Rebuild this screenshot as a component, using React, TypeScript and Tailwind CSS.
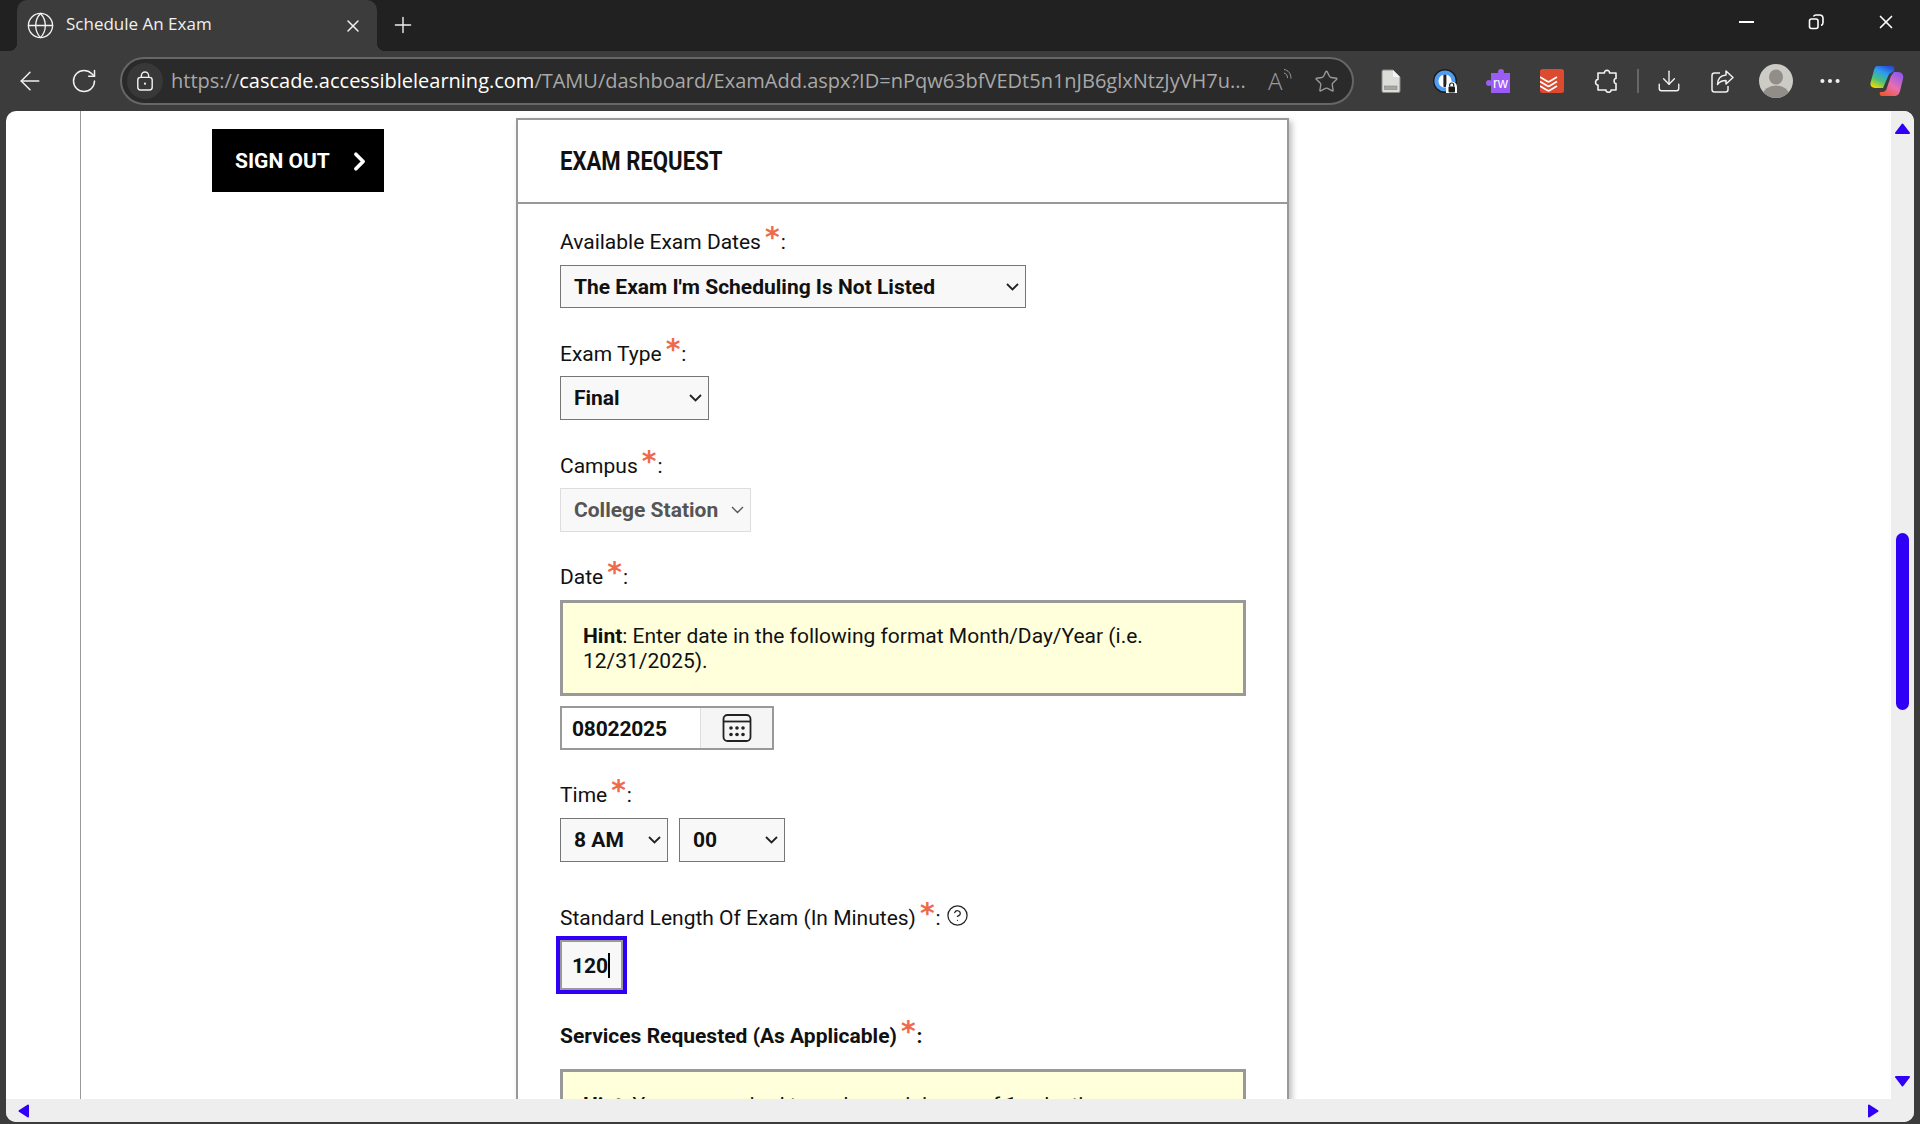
import { ArrowLeft, CircleHelp, Globe, Plus, RotateCw, Star, X, ChevronRight, Download, Ellipsis } from 'lucide-react';
import type { ReactNode } from 'react';

function RequiredLabel({ children, bold, className }: { children: ReactNode; bold?: boolean; className?: string }) {
  return (
    <label className={`flex h-[24px] items-center text-[21px] leading-[24px] text-[#111] ${bold ? 'font-bold' : ''} ${className ?? ''}`}>
      <span>{children}</span>
      <span className="ml-[4px] -translate-y-[4px] font-['DejaVu_Sans',sans-serif] text-[28px] leading-[24px] font-bold text-[#ed6a4a]">*</span>
      <span className="ml-[1px]">:</span>
    </label>
  );
}

function Hint({ children, className }: { children: ReactNode; className?: string }) {
  return (
    <div className={`w-[686px] border-[3px] border-[#999] bg-[#ffffdc] px-[20px] py-[21px] text-[21px] leading-[25px] text-[#111] ${className ?? ''}`}>
      <strong>Hint</strong>: {children}
    </div>
  );
}

function Select({ value, className, muted }: { value: string; className: string; muted?: boolean }) {
  return (
    <div className={`relative ${className}`}>
      <select
        disabled={muted}
        defaultValue={value}
        className={`block h-full w-full appearance-none border pl-[13px] pt-[2px] text-[21px] font-bold opacity-100 ${muted ? 'border-[#ddd] bg-[#f8f8f8] text-[#555]' : 'border-[#767676] bg-[#f8f8f8] text-[#111]'}`}
      >
        <option value={value}>{value}</option>
      </select>
      <svg viewBox="0 0 13 8" fill="none" stroke={muted ? '#555' : '#222'} strokeWidth={muted ? 1.4 : 1.8} className="pointer-events-none absolute right-[7px] top-1/2 h-[8px] w-[13px] -translate-y-1/2">
        <path d="M1 1l5.500 5.500L12 1" />
      </svg>
    </div>
  );
}

function ExtensionIcons() {
  return (
    <div className="flex items-center">
      <svg viewBox="0 0 21 24" className="h-[24px] w-[21px]">
        <path d="M2 2.500A1.500 1.500 0 0 1 3.500 1H13l7 7v14a1.500 1.500 0 0 1-1.500 1.500h-15A1.500 1.500 0 0 1 2 22z" fill="#dcdcd8" stroke="#8a8a88" />
        <path d="M13 1v7h7z" fill="#f4f4f2" />
        <rect x="4.500" y="17" width="12.500" height="3.500" fill="#a6a6a4" stroke="#777" strokeWidth="0.5" />
      </svg>
      <svg viewBox="0 0 24 24" className="ml-[32px] h-[24px] w-[24px]">
        <circle cx="12" cy="12" r="12" fill="#1c1c1c" />
        <circle cx="12" cy="12" r="8.600" fill="#fff" stroke="#4f9cf5" strokeWidth="4" />
        <rect x="10.400" y="5.500" width="3" height="12.500" rx="1" fill="#222" />
        <path d="M13 24v-6a4 4 0 0 1 11 0v6z" fill="#fff" />
        <rect x="15.500" y="17.500" width="6.500" height="6" rx="1" fill="#1c1c1c" />
        <path d="M16.700 17.500v-1.500a2 2 0 0 1 4 0v1.500" fill="none" stroke="#1c1c1c" strokeWidth="1.200" />
      </svg>
      <div className="relative ml-[29px] h-[24px] w-[24px]">
        <span className="absolute left-[0px] top-[11px] h-[6px] w-[6px] rounded-full bg-[#9b5cf6]" />
        <span className="absolute left-[12px] top-[0px] h-[6px] w-[6px] rounded-full bg-[#9b5cf6]" />
        <span className="absolute left-[5px] top-[4px] flex h-[20px] w-[19px] items-center justify-center bg-[#9b5cf6] font-['Liberation_Sans',sans-serif] text-[14px] leading-none text-white">rw</span>
      </div>
      <svg viewBox="0 0 24 24" className="ml-[30px] h-[24px] w-[24px]">
        <rect width="24" height="24" rx="2.500" fill="#dc4a30" />
        <path d="M0 8l7.500 4.500c.8.400 1.200.400 2 0L17 8M0 12.500l7.500 4.500c.8.400 1.200.400 2 0l7.500-4.500M0 17l7.500 4.500c.8.400 1.200.400 2 0l7.500-4.500" fill="none" stroke="#fff" strokeWidth="1.800" />
      </svg>
      <svg viewBox="0 0 24 24" fill="none" stroke="#f2f2f2" strokeWidth="1.600" strokeLinejoin="round" className="ml-[30px] h-[24px] w-[24px]">
        <path d="M4 4h6.500c-.5-3.500 5.500-3.500 5 0H22v5.500c-2.500-.5-2.500 5.500 0 5V21h-5c.5 3-5.500 3-5 0H4v-5C.8 16.500.8 10 4 10.500z" />
      </svg>
    </div>
  );
}

function Copilot() {
  return (
    <svg viewBox="0 0 34 32" className="h-[32px] w-[34px]">
      <defs>
        <linearGradient id="cpa" x1="0.2" y1="1" x2="0.7" y2="0">
          <stop offset="0" stopColor="#f5d800" />
          <stop offset="0.35" stopColor="#48c27a" />
          <stop offset="0.7" stopColor="#2f9bf0" />
          <stop offset="1" stopColor="#2a4fd8" />
        </linearGradient>
        <linearGradient id="cpb" x1="0.2" y1="1" x2="0.8" y2="0">
          <stop offset="0" stopColor="#f0562e" />
          <stop offset="0.45" stopColor="#e86fb0" />
          <stop offset="1" stopColor="#8f58ee" />
        </linearGradient>
      </defs>
      <path d="M7 1h14c3 0 4 2 3 5l-5 3-6 14H5c-4 0-5.500-3-4-7L4 5c1-3 2-4 3-4z" fill="url(#cpa)" />
      <path d="M21 11l3-4h4c4 0 6 3 5 7l-3 12c-1 4-3 5-6 5H12c-2 0-3-2-2-4 4 0 5.500-.5 6.500-3z" fill="url(#cpb)" />
    </svg>
  );
}

function Chrome() {
  return (
    <>
      <div className="flex h-[51px] shrink-0 items-end bg-[#212121] pl-[17px]">
        <div className="relative flex h-[51px] w-[360px] items-center rounded-t-[10px] bg-[#3c3c3c] pl-[9px] pr-[14px] text-white">
          <span className="absolute -left-[8px] bottom-0 h-[8px] w-[8px] bg-[radial-gradient(circle_at_0_0,transparent_8px,#3c3c3c_8px)]" />
          <span className="absolute -right-[8px] bottom-0 h-[8px] w-[8px] bg-[radial-gradient(circle_at_100%_0,transparent_8px,#3c3c3c_8px)]" />
          <Globe className="h-[29px] w-[29px] text-[#f2f2f2]" strokeWidth={1.100} />
          <span className="ml-[11px] flex-1 -translate-y-[2px] font-['Open_Sans',sans-serif] text-[17px] text-[#f0f0f0]">Schedule An Exam</span>
          <X className="h-[20px] w-[20px] text-[#f0f0f0]" strokeWidth={1.800} />
        </div>
        <Plus className="mb-[13px] ml-[13px] h-[26px] w-[26px] text-[#f0f0f0]" strokeWidth={1.300} />
        <div className="mb-[18px] ml-auto flex items-center text-white">
          <span className="h-[2px] w-[15px] bg-white" />
          <svg viewBox="0 0 16 16" fill="none" stroke="#fff" strokeWidth="1.600" className="ml-[54px] h-[16px] w-[16px]">
            <rect x="1.500" y="5" width="8.500" height="9.500" rx="2" />
            <path d="M5.500 2.500c.5-1 1.200-1.500 2.500-1.500h3.500c2 0 3.500 1.500 3.500 3.500v4c0 1.500-.5 2.500-2 3" />
          </svg>
          <X className="ml-[51px] mr-[23px] h-[22px] w-[22px]" strokeWidth={1.800} />
        </div>
      </div>
      <div className="flex h-[60px] shrink-0 items-center bg-[#3c3c3c]">
        <ArrowLeft className="ml-[15px] h-[30px] w-[30px] text-[#f0f0f0]" strokeWidth={1.200} />
        <RotateCw className="ml-[25px] h-[28px] w-[28px] text-[#f0f0f0]" strokeWidth={1.300} />
        <div className="ml-[22px] flex h-[48px] w-[1234px] items-center rounded-full border-2 border-[#666] bg-[#2a2a2a] pl-[5px]">
          <span className="flex h-[36px] w-[36px] items-center justify-center rounded-full bg-[#383838]">
            <svg viewBox="0 0 20 24" fill="none" stroke="#f0f0f0" strokeWidth="1.600" className="h-[22px] w-[18px]">
              <rect x="2" y="8" width="16" height="14" rx="3" />
              <path d="M6 8V6a4 4 0 0 1 8 0v2" />
              <circle cx="10" cy="15" r="1.200" fill="#f0f0f0" stroke="none" />
            </svg>
          </span>
          <span className="ml-[8px] w-[1076px] truncate font-['Open_Sans',sans-serif] text-[20px] text-[#a8a8a8]">
            https://<span className="text-white">cascade.accessiblelearning.com</span>/TAMU/dashboard/ExamAdd.aspx?ID=nPqw63bfVEDt5n1nJB6glxNtzJyVH7u...
          </span>
          <span className="relative ml-[21px] h-[26px] w-[24px]">
            <span className="absolute bottom-0 left-0 font-['Open_Sans',sans-serif] text-[24px] leading-[26px] font-light text-[#999]">A</span>
            <svg viewBox="0 0 10 12" fill="none" stroke="#999" strokeWidth="1" className="absolute -right-[1px] top-0 h-[12px] w-[10px]">
              <path d="M1 1.500c4 .5 7 4 7 9M1 5c2 .5 3.500 2 3.500 5" />
            </svg>
          </span>
          <Star className="ml-[22px] h-[25px] w-[25px] text-[#999]" strokeWidth={1.300} />
        </div>
        <div className="ml-[26px]">
          <ExtensionIcons />
        </div>
        <span className="ml-[19px] h-[24px] w-[2px] bg-[#666]" />
        <Download className="ml-[17px] h-[26px] w-[26px] text-[#f0f0f0]" strokeWidth={1.300} />
        <svg viewBox="0 0 24 24" fill="none" stroke="#f0f0f0" strokeWidth="1.500" strokeLinejoin="round" className="ml-[28px] h-[24px] w-[24px]">
          <path d="M10 4H4.500A2.500 2.500 0 0 0 2 6.500v14A2.500 2.500 0 0 0 4.500 23h11a2.500 2.500 0 0 0 2.500-2.500V17" />
          <path d="M16 2l7 6.500-7 6.500v-3.500c-4 0-6.500 1-8.500 4 0-5.500 3-9 8.500-9.500z" />
        </svg>
        <svg viewBox="0 0 34 34" className="ml-[25px] h-[34px] w-[34px]">
          <clipPath id="av"><circle cx="17" cy="17" r="17" /></clipPath>
          <g clipPath="url(#av)">
            <rect width="34" height="34" fill="#cdcbc6" />
            <ellipse cx="17" cy="13" rx="7" ry="7.500" fill="#918e8a" />
            <ellipse cx="17" cy="31" rx="13" ry="9.500" fill="#918e8a" />
          </g>
        </svg>
        <Ellipsis className="ml-[24px] h-[26px] w-[26px] text-[#f0f0f0]" strokeWidth={1.800} />
        <div className="ml-[27px]">
          <Copilot />
        </div>
      </div>
    </>
  );
}

function Arrow({ d, className }: { d: string; className: string }) {
  return (
    <svg className={className}>
      <path d={d} fill="#2f00f5" stroke="#2f00f5" strokeWidth="2" strokeLinejoin="round" />
    </svg>
  );
}

function ExamRequest() {
  return (
    <section className="mt-[7px] h-[1200px] w-[773px] shrink-0 border-2 border-[#999] shadow-[3px_3px_6px_rgba(0,0,0,0.25)]">
      <div className="flex h-[84px] items-center border-b-2 border-[#999] pl-[42px] pt-[2px]">
        <h2 className="origin-left scale-x-[0.885] whitespace-nowrap text-[25px] font-bold uppercase text-[#111]">Exam Request</h2>
      </div>
      <div className="flex flex-col items-start pl-[42px]">
        <RequiredLabel className="mt-[26px]">Available Exam Dates</RequiredLabel>
        <Select value="The Exam I'm Scheduling Is Not Listed" className="mt-[11px] h-[43px] w-[466px]" />

        <RequiredLabel className="mt-[34px]">Exam Type</RequiredLabel>
        <Select value="Final" className="mt-[10px] h-[44px] w-[149px]" />

        <RequiredLabel className="mt-[34px]">Campus</RequiredLabel>
        <Select muted value="College Station" className="mt-[10px] h-[44px] w-[191px]" />

        <RequiredLabel className="mt-[33px]">Date</RequiredLabel>
        <Hint className="mt-[11px] h-[96px]">Enter date in the following format Month/Day/Year (i.e. 12/31/2025).</Hint>
        <div className="mt-[10px] flex h-[44px] w-[214px] border-2 border-[#999]">
          <input defaultValue="08022025" className="w-[138px] bg-white pl-[10px] pt-[3px] text-[21px] font-bold tracking-[-0.2px] text-[#111] outline-none" />
          <span className="flex flex-1 items-center justify-center border-l border-[#ddd] bg-[#f5f5f5]">
            <svg viewBox="0 0 30 30" fill="none" stroke="#222" strokeWidth="1.800" className="h-[30px] w-[30px]">
              <rect x="1.500" y="2" width="27" height="26" rx="4" />
              <path d="M1.500 8.500h27" />
              <g fill="#222" stroke="none">
                <circle cx="9" cy="15" r="1.800" /><circle cx="15" cy="15" r="1.800" /><circle cx="21" cy="15" r="1.800" />
                <circle cx="9" cy="21.500" r="1.800" /><circle cx="15" cy="21.500" r="1.800" /><circle cx="21" cy="21.500" r="1.800" />
              </g>
            </svg>
          </span>
        </div>

        <RequiredLabel className="mt-[33px]">Time</RequiredLabel>
        <div className="mt-[11px] flex gap-[11px]">
          <Select value="8 AM" className="h-[44px] w-[108px]" />
          <Select value="00" className="h-[44px] w-[106px]" />
        </div>

        <div className="mt-[44px] flex items-center">
          <RequiredLabel>Standard Length Of Exam (In Minutes)</RequiredLabel>
          <CircleHelp className="ml-[5px] h-[23px] w-[23px] -translate-y-[3px] text-[#222]" strokeWidth={1.300} />
        </div>
        <div className="relative mt-[10px] h-[50px] w-[63px] border-2 border-[#999] bg-[#f8f8f8] outline-[4px] outline-[#2f00f5]">
          <input defaultValue="120" className="h-full w-full bg-transparent pl-[10px] pt-[2px] text-[21px] font-bold text-[#111] outline-none" />
          <span className="absolute left-[46px] top-[11px] h-[25px] w-[2px] bg-black" />
        </div>

        <RequiredLabel bold className="mt-[34px]">Services Requested (As Applicable)</RequiredLabel>
        <Hint className="mt-[21px]">You are required to make a minimum of 1 selection.</Hint>
      </div>
    </section>
  );
}

export default function App() {
  return (
    <div className="flex h-[1124px] w-[1920px] flex-col overflow-hidden bg-[#3c3c3c] font-['Roboto',sans-serif]">
      <Chrome />
      <div className="min-h-0 flex-1 px-[6px] pb-[2px]">
        <div className="flex h-full flex-col overflow-hidden rounded-[10px] bg-white">
          <div className="flex min-h-0 flex-1">
            <div className="flex min-w-0 flex-1 overflow-hidden">
              <div className="w-[75px] shrink-0 border-r border-[#999]" />
              <div className="w-[435px] shrink-0 pl-[131px] pt-[18px]">
                <button className="flex h-[63px] w-[172px] items-center bg-black pl-[23px] pt-[2px] text-[21px] font-bold uppercase text-white">
                  Sign Out
                  <ChevronRight className="ml-[15px] h-[29px] w-[29px]" strokeWidth={3} />
                </button>
              </div>
              <ExamRequest />
            </div>
            <div className="flex w-[23px] shrink-0 flex-col items-center bg-[#eee] py-[12px]">
              <Arrow d="M7.500 1.500L1 10h13z" className="h-[11px] w-[15px]" />
              <div className="mt-[399px] h-[177px] w-[13px] rounded-full bg-[#2f00f5]" />
              <Arrow d="M1 1h13L7.500 9.500z" className="mt-auto h-[11px] w-[15px]" />
            </div>
          </div>
          <div className="flex h-[23px] shrink-0 items-center justify-between bg-[#eee] pl-[12px] pr-[35px]">
            <Arrow d="M10 1.500L1.500 7l8.500 5.500z" className="h-[14px] w-[11px]" />
            <Arrow d="M1 1.500L9.500 7 1 12.500z" className="h-[14px] w-[11px]" />
          </div>
        </div>
      </div>
    </div>
  );
}
